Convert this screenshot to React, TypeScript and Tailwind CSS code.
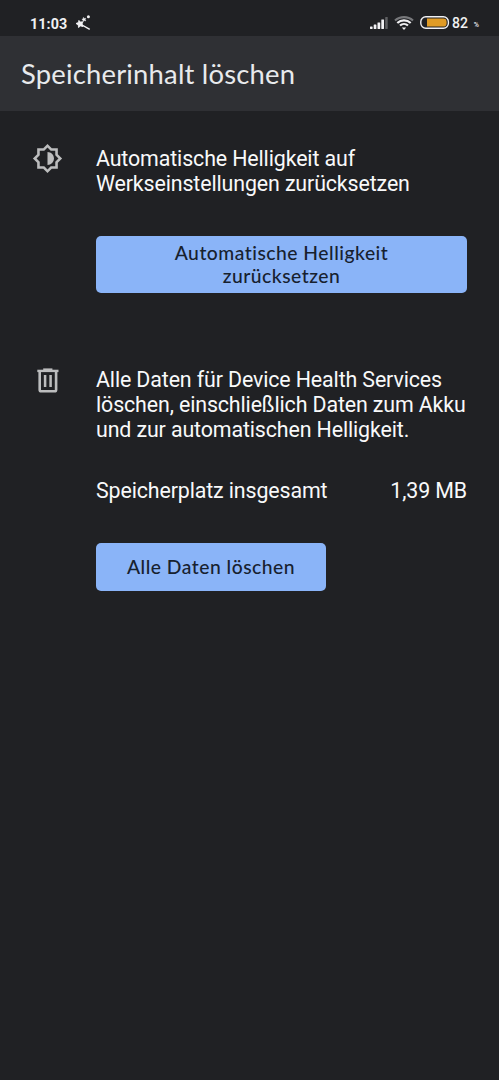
import type { ReactNode } from 'react'
import clsx from 'clsx'

const MagicWandIcon = () => (
  <svg className="ml-[8px] mt-[1px] h-[17px] w-[17px]" viewBox="0 0 17 17" fill="#f1f1f3">
    <path
      d="M3.9 5.4l1.5 1.7 2.5-.3-.9 2.2 1 2.5-2.5-.6-2 1.6-.2-2.6L1 8.5l2.5-1z"
      stroke="#f1f1f3"
      strokeWidth=".9"
    />
    <path d="M6.5 9l8.6 4.7-.7 1.4-8.7-5.2z" />
    <path
      d="M8.4 2.4l.9 1 1.4-.1-.5 1.3.6 1.3-1.4-.3-1.1.9-.2-1.4-1.2-.7 1.3-.6z"
      stroke="#f1f1f3"
      strokeWidth=".5"
    />
    <circle cx="13.4" cy="1.8" r="1.5" />
  </svg>
)

const SignalIcon = () => (
  <svg className="h-[14px] w-[18px]" viewBox="0 0 18 14" fill="#f1f1f3">
    <rect x="0" y="10.6" width="2.6" height="2.4" rx=".4" />
    <rect x="3.7" y="8.6" width="2.7" height="4.4" rx=".4" />
    <rect x="7.5" y="6.4" width="2.7" height="6.6" rx=".4" />
    <rect x="11.3" y="3.4" width="2.7" height="9.6" rx=".4" />
    <rect x="15.2" y="1" width="2.5" height="12" rx=".4" fill="#5e5f62" />
  </svg>
)

const WifiIcon = () => (
  <svg
    className="ml-[6px] h-[14px] w-[20px]"
    viewBox="0 0 20 14"
    fill="none"
    strokeWidth="2.1"
  >
    <path d="M1 4.6C6 0 14 0 19 4.6" stroke="#77787b" />
    <path d="M3.3 7.1c3.8-3.7 9.6-3.7 13.4 0" stroke="#f1f1f3" />
    <path d="M6 9.6c2.3-2.2 5.7-2.2 8 0" stroke="#f1f1f3" />
    <path d="M7.8 11.4h4.4L10 13.9z" fill="#f1f1f3" />
  </svg>
)

const BatteryIcon = () => (
  <svg className="ml-[6px] h-[13px] w-[30px]" viewBox="0 0 30 13" fill="none">
    <rect x=".8" y=".8" width="27.6" height="11.4" rx="5" stroke="#f1f1f3" strokeWidth="1.4" />
    <path d="M7 2.4h16.2a3.4 3.4 0 013.4 3.4v1.4a3.4 3.4 0 01-3.4 3.4H7z" fill="#e09b25" />
  </svg>
)

const BrightnessIcon = () => (
  <svg className="mr-px h-[31px] w-[31px]" viewBox="0 0 24 24" fill="currentColor">
    <path d="M20 8.69V4h-4.69L12 .69 8.69 4H4v4.69L.69 12 4 15.31V20h4.69L12 23.31 15.31 20H20v-4.69L23.31 12 20 8.69zm-2 5.79V18h-3.52L12 20.48 9.52 18H6v-3.52L3.52 12 6 9.52V6h3.52L12 3.52 14.48 6H18v3.52L20.48 12 18 14.48z" />
    <path d="M12 7v10c2.76 0 5-2.24 5-5s-2.24-5-5-5z" />
  </svg>
)

const TrashIcon = () => (
  <svg className="h-[25px] w-[22px]" viewBox="0 0 22 25" fill="none" stroke="currentColor">
    <path d="M.3 2.9h21.2" strokeWidth="2.4" />
    <path d="M6.2 1.4h9.2" strokeWidth="2" />
    <path d="M2.7 3v18.7c0 1 .6 1.6 1.6 1.6h13.2c1 0 1.6-.6 1.6-1.6V3" strokeWidth="2.6" />
    <path d="M8.1 6.9v12M13.6 6.9v12" strokeWidth="2.5" />
  </svg>
)

const StatusBar = () => (
  <div className="flex h-9 items-center pl-[30px] pr-5 pt-[9px] text-[#f1f1f3]">
    <span className="mt-[3px] text-[14.3px] font-bold leading-none tracking-[0.1px]">
      11:03
    </span>
    <MagicWandIcon />
    <div className="ml-auto flex items-center">
      <SignalIcon />
      <WifiIcon />
      <BatteryIcon />
      <span className="ml-[2px] mt-px text-[14px] font-medium leading-none">82</span>
      <span className="ml-[6px] mt-[5px] text-[7px] font-medium leading-none">%</span>
    </div>
  </div>
)

const Section = ({
  icon,
  children,
  className
}: {
  icon: ReactNode
  children: ReactNode
  className?: string
}) => (
  <section className={clsx('flex pr-8', className)}>
    <div className="flex w-24 shrink-0 justify-center text-[#bcbdbe]">{icon}</div>
    <div className="min-w-0 flex-1">{children}</div>
  </section>
)

const ActionButton = ({
  children,
  className
}: {
  children: ReactNode
  className?: string
}) => (
  <button
    className={clsx(
      'flex items-center justify-center rounded-[5px] bg-[#8ab4f8] pb-0.5 text-center font-[Lato,sans-serif] text-[19.3px] font-medium leading-[23px] tracking-[0.5px] text-[#17212f]',
      className
    )}
  >
    {children}
  </button>
)

export default function App() {
  return (
    <div className="min-h-screen bg-[#202124] font-[Roboto,sans-serif] text-[21.4px] leading-[25px] text-[#f8f9fa]">
      <StatusBar />
      <header className="flex h-[74.5px] items-center bg-[#2f3034] pl-[21px]">
        <h1 className="whitespace-nowrap font-[Lato,sans-serif] text-[27.4px] leading-none tracking-[0.2px] text-[#e8eaed]">
          Speicherinhalt löschen
        </h1>
      </header>

      <main className="tracking-[-0.13px]">
        <Section icon={<BrightnessIcon />} className="pt-[32.5px]">
          <p className="mt-[3px] whitespace-nowrap">
            Automatische Helligkeit auf
            <br />
            Werkseinstellungen zurücksetzen
          </p>
          <ActionButton className="mt-10 h-[57px] w-full">
            Automatische Helligkeit
            <br />
            zurücksetzen
          </ActionButton>
        </Section>

        <Section icon={<TrashIcon />} className="pt-[75px]">
          <p className="-mt-px whitespace-nowrap">
            Alle Daten für Device Health Services
            <br />
            löschen, einschließlich Daten zum Akku
            <br />
            und zur automatischen Helligkeit.
          </p>
          <div className="mt-9 flex justify-between whitespace-nowrap">
            <span>Speicherplatz insgesamt</span>
            <span>1,39 MB</span>
          </div>
          <ActionButton className="mt-10 h-12 w-[230px]">
            Alle Daten löschen
          </ActionButton>
        </Section>
      </main>
    </div>
  )
}
